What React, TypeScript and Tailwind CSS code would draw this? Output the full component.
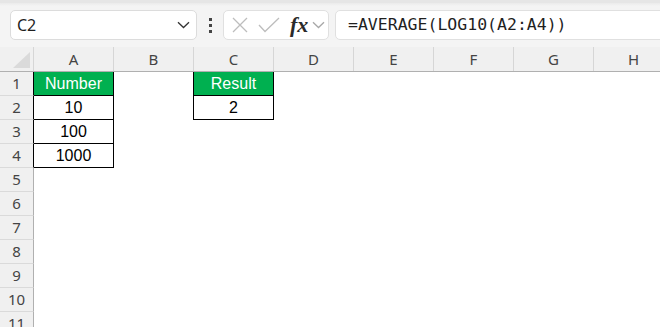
import React from "react";

const COLS = ["A", "B", "C", "D", "E", "F", "G", "H"];
const ROWS = [1, 2, 3, 4, 5, 6, 7, 8, 9, 10, 11];

type CellSpec = { text?: string; green?: boolean; box?: boolean };

const DATA: Record<string, CellSpec> = {
  A1: { text: "Number", green: true, box: true },
  A2: { text: "10", box: true },
  A3: { text: "100", box: true },
  A4: { text: "1000", box: true },
  C1: { text: "Result", green: true, box: true },
  C2: { text: "2", box: true },
};

function Chevron({ color }: { color: string }) {
  return (
    <svg width="13" height="8" viewBox="0 0 13 8" fill="none">
      <path d="M1 1.2 L6.5 6.5 L12 1.2" stroke={color} strokeWidth="1.3" />
    </svg>
  );
}

export default function App() {
  return (
    <div className="w-[660px] h-[327px] overflow-hidden bg-white relative" style={{ fontFamily: '"Noto Sans", sans-serif' }}>
      {/* Toolbar */}
      <div className="h-[47px] bg-[#f4f4f4] relative">
        <div className="h-[3px] bg-[#e6e6e6]" />
        <div className="h-[3px] bg-gradient-to-b from-[#ebebeb] to-[#f4f4f4]" />
        <div className="absolute left-0 top-[10px] flex items-center w-[700px]">
          {/* Name box */}
          <div className="ml-[10px] w-[187px] h-[30px] bg-white border border-[#dcdcdc] rounded-[5px] flex items-center justify-between pl-[6px] pr-[6px]">
            <span className="text-[16px] text-[#1f1f1f] leading-none">C2</span>
            <Chevron color="#333333" />
          </div>
          {/* dots */}
          <div className="w-[26px] flex flex-col items-center gap-[3px]">
            <div className="w-[3px] h-[3px] bg-[#444]" />
            <div className="w-[3px] h-[3px] bg-[#444]" />
            <div className="w-[3px] h-[3px] bg-[#444]" />
          </div>
          {/* icon box */}
          <div className="w-[106px] h-[30px] bg-white border border-[#e0e0e0] rounded-[5px] flex items-center pl-[8px]">
            <svg width="16" height="16" viewBox="0 0 16 16" fill="none">
              <path d="M1 1 L15 15 M15 1 L1 15" stroke="#bdbdbd" strokeWidth="1.3" />
            </svg>
            <svg className="ml-[10px]" width="22" height="16" viewBox="0 0 22 16" fill="none">
              <path d="M1 8 L7 14.5 L21 1" stroke="#bdbdbd" strokeWidth="1.3" />
            </svg>
            <span
              className="ml-[10px] text-[22px] italic font-semibold text-[#2a2a2a] leading-none"
              style={{ fontFamily: '"Liberation Serif", serif' }}
            >
              fx
            </span>
            <span className="ml-[4px] flex items-center">
              <Chevron color="#a8a8a8" />
            </span>
          </div>
          {/* formula box */}
          <div className="ml-[6px] flex-1 h-[30px] bg-white border border-[#e0e0e0] rounded-[5px] flex items-center pl-[12px]">
            <span
              className="text-[16.5px] text-[#1f1f1f] leading-none"
              style={{ fontFamily: '"DejaVu Sans Mono", monospace' }}
            >
              =AVERAGE(LOG10(A2:A4))
            </span>
          </div>
        </div>
      </div>

      {/* Column header */}
      <div className="flex h-[25px] bg-[#f0f0f0] border-b border-[#b0b0b0]">
        <div className="w-[34px] shrink-0 h-full border-r border-[#d6d6d6] relative">
          <svg className="absolute left-[13px] top-[5px]" width="17" height="16" viewBox="0 0 17 16">
            <polygon points="17,0 17,16 0,16" fill="#dadada" />
          </svg>
        </div>
        {COLS.map((c) => (
          <div
            key={c}
            className="w-[80px] shrink-0 h-full border-r border-[#d6d6d6] flex items-center justify-center text-[15px] text-[#444]"
          >
            {c}
          </div>
        ))}
      </div>

      {/* Rows */}
      {ROWS.map((r) => {
        const aBox = DATA["A" + r]?.box;
        return (
          <div key={r} className="flex h-[24px]">
            <div
              className={`w-[34px] shrink-0 h-full bg-[#f0f0f0] border-b border-[#dadada] border-r flex items-center justify-center text-[15px] text-[#444] ${
                aBox ? "border-r-black" : "border-r-[#b0b0b0]"
              }`}
            >
              {r}
            </div>
            {COLS.map((c, i) => {
              const spec = DATA[c + r];
              const nextBox = i + 1 < COLS.length && DATA[COLS[i + 1] + r]?.box;
              const belowBox = spec?.box || false;
              return (
                <div
                  key={c}
                  className={`w-[80px] shrink-0 h-full flex items-center justify-center text-[16px] ${
                    spec?.green ? "bg-[#00b050] text-white" : "bg-white text-black"
                  } ${belowBox ? "border-b border-black" : ""} ${
                    spec?.box || nextBox ? "border-r border-black" : ""
                  }`}
                  style={{ fontFamily: '"Liberation Sans", Arial, sans-serif' }}
                >
                  {spec?.text}
                </div>
              );
            })}
          </div>
        );
      })}
    </div>
  );
}
